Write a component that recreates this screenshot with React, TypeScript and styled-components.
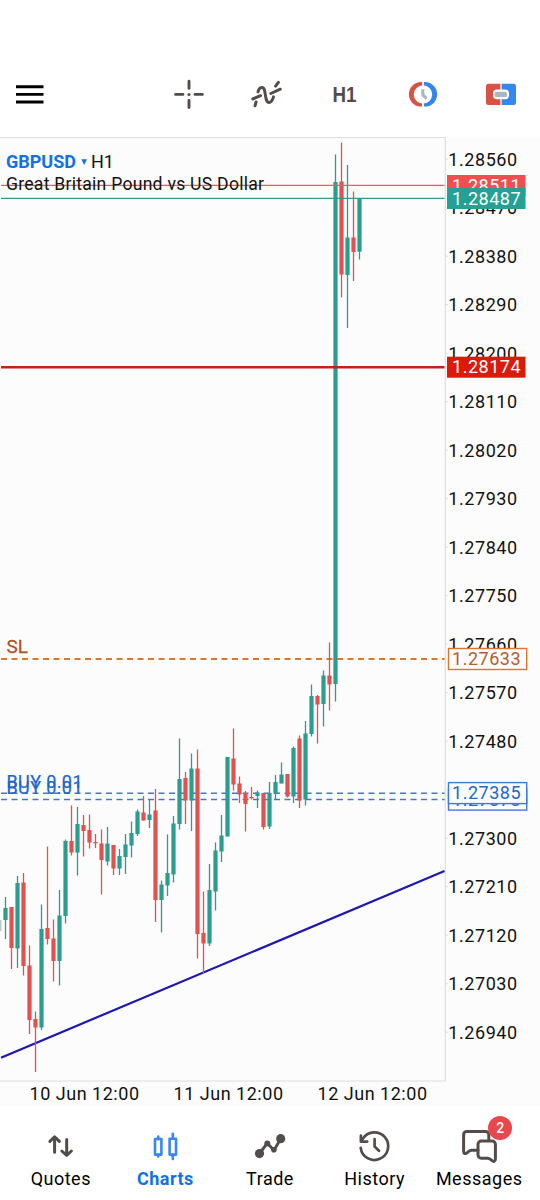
import React from 'react'
import styled, { createGlobalStyle } from 'styled-components'

const GlobalStyle = createGlobalStyle`
  body {
    margin: 0;
    background: #fff;
    font-family: Roboto, 'Liberation Sans', sans-serif;
  }
`

const colors = {
  up: '#2a9d8f',
  down: '#e0524f',
  icon: '#544c49',
  accent: '#1370e6',
  ink: '#111',
}

const Screen = styled.div`
  width: 540px;
  height: 1200px;
  display: flex;
  flex-direction: column;
  background: #fff;
  overflow: hidden;
`

const Header = styled.header`
  height: 137px;
  box-sizing: border-box;
  padding: 51px 0 0 10px;
  display: flex;
  align-items: center;
  justify-content: space-between;
`

const Tools = styled.div`
  display: grid;
  grid-template-columns: repeat(5, 78px);
`

const IconButton = styled.button`
  border: 0;
  padding: 0;
  background: none;
  display: flex;
  align-items: center;
  justify-content: center;
`

const Icon = styled.svg`
  display: block;
  width: 40px;
  height: 40px;
  overflow: visible;
  fill: none;
  stroke-linecap: round;
  stroke-linejoin: round;
`

const ChartSvg = styled.svg`
  display: block;
  flex: 0 0 970px;
  width: 540px;
  height: 970px;
  background: #fcfcfc;
`

const Nav = styled.nav`
  flex: 1;
  display: grid;
  grid-template-columns: repeat(5, 104.6px);
  justify-content: center;
  padding-top: 18.5px;
`

const NavItem = styled.a<{ $active?: boolean }>`
  display: flex;
  flex-direction: column;
  align-items: center;
  font-size: 18px;
  line-height: 22px;
  letter-spacing: 0.5px;
  white-space: nowrap;
  font-weight: ${(p) => (p.$active ? 700 : 400)};
  color: ${(p) => (p.$active ? colors.accent : '#000')};
`

const NavIcon = styled.div`
  position: relative;
  height: 42.5px;
  margin-right: 1px;
`

const Badge = styled.span`
  position: absolute;
  left: 29.5px;
  top: -9.5px;
  width: 24px;
  height: 24px;
  border-radius: 50%;
  background: #e8484c;
  color: #fff;
  font-size: 14px;
  font-weight: 500;
  line-height: 24px;
  letter-spacing: 0;
  text-align: center;
`

// [direction, high, body top, body bottom, low]
type Candle = ['u' | 'd', number, number, number, number]

const candles: Candle[] = [
  ['u', 897, 908, 920, 939],
  ['d', 907, 907, 948, 969],
  ['u', 876, 883, 948.5, 968],
  ['d', 873, 882.5, 966, 975.5],
  ['d', 945.5, 965.5, 1020, 1034],
  ['d', 1011.5, 1019, 1027.5, 1072],
  ['u', 904.5, 929, 1027.5, 1030],
  ['d', 846.5, 928, 939, 944.5],
  ['d', 919.5, 938.5, 961, 981.5],
  ['u', 890, 915.5, 961, 985.5],
  ['u', 839.5, 841, 916, 923.5],
  ['d', 805.5, 841, 852.5, 855.5],
  ['u', 807, 824, 852.5, 875.5],
  ['d', 815, 825, 831, 856.5],
  ['d', 814.5, 830, 842.5, 848.5],
  ['d', 834, 842, 843.3, 848],
  ['d', 829.5, 843.5, 860, 894.5],
  ['u', 827, 843.5, 861.5, 865.5],
  ['d', 845, 845, 868.5, 875],
  ['u', 849, 856, 868.5, 875],
  ['u', 834, 844.5, 857, 874],
  ['u', 821.5, 833, 845.5, 857.5],
  ['u', 809.5, 811.5, 834, 836],
  ['d', 796, 812.5, 820.5, 820.5],
  ['u', 800, 814.5, 820, 828],
  ['d', 789, 810.5, 900, 922],
  ['u', 880.5, 884.5, 900, 932.5],
  ['u', 834.5, 873, 885.5, 896],
  ['u', 816, 823.5, 874.5, 882.5],
  ['u', 738.5, 779, 824, 829.5],
  ['d', 772, 778, 800.5, 824],
  ['u', 753.5, 768.5, 800.5, 831],
  ['d', 749.5, 768.5, 934, 958.5],
  ['d', 891.5, 933, 943.5, 974],
  ['u', 864, 890, 943.5, 946],
  ['u', 842.5, 850.5, 891.5, 910.5],
  ['u', 815, 835.5, 851.5, 862],
  ['u', 757, 757, 836.5, 836.5],
  ['d', 728.5, 758.5, 784.5, 790.5],
  ['d', 776.5, 783.5, 794.5, 803],
  ['d', 791, 793, 804, 831.5],
  ['d', 787, 797, 798.3, 799.5],
  ['u', 790.5, 792.5, 796, 808],
  ['d', 793, 793, 827, 829.5],
  ['u', 782, 793, 826.5, 829],
  ['u', 775, 782, 793.5, 799],
  ['u', 762.5, 774.5, 783.5, 783.5],
  ['d', 774, 774, 796.5, 797.5],
  ['u', 746.5, 748, 796.5, 803],
  ['d', 735.5, 738.5, 800.5, 808],
  ['u', 721, 733.5, 799.5, 805.5],
  ['u', 684.5, 696, 734, 736.5],
  ['d', 695, 696, 704.5, 743.5],
  ['u', 670.5, 675.5, 704, 726.5],
  ['d', 642.5, 675.5, 684.5, 710.5],
  ['u', 154.5, 182, 684, 701.5],
  ['d', 142.5, 181.5, 274.5, 297.5],
  ['u', 165, 237.5, 275, 328],
  ['d', 191.5, 237.5, 252, 281],
  ['u', 198, 198.5, 251.7, 259.5],
]

// the 1.27390 tick is fully covered by the order tags
const ticks = Array.from({ length: 19 }, (_, i) => ({
  y: 159.2 + i * 48.5,
  label: (1.2856 - i * 0.0009).toFixed(5),
})).filter(({ label }) => label !== '1.27390')

const dates = [
  { x: 29.5, label: '10 Jun 12:00' },
  { x: 173.5, label: '11 Jun 12:00' },
  { x: 317.5, label: '12 Jun 12:00' },
]

interface PriceTagProps {
  y: number
  label: string
  fill: string
  stroke?: string
  color?: string
}

const PriceTag: React.FC<PriceTagProps> = ({ y, label, fill, stroke, color = '#fff' }) => (
  <g>
    {stroke ? (
      <rect x={448.5} y={y - 10.5} width={78.2} height={21} fill={fill} stroke={stroke} strokeWidth={1.4} />
    ) : (
      <rect x={447} y={y - 10.5} width={78.5} height={21} fill={fill} />
    )}
    <text x={452} y={y + 6.2} fontSize={18} fill={color} textLength={68.5} lengthAdjust='spacing'>
      {label}
    </text>
  </g>
)

const Chart: React.FC = () => (
  <ChartSvg viewBox='0 137 540 970'>
    <path d='M0 137.5H445.3V1081H0' fill='none' stroke='#dedede' strokeWidth={1.2} />

    <path d='M1 793.3H444.5M1 799.6H444.5' stroke='#3f78cf' strokeWidth={1.5} strokeDasharray='6 4.5' />
    <path d='M1 659H444.5' stroke='#d9772f' strokeWidth={1.9} strokeDasharray='6 4.5' />
    <path d='M1 1057.7L444.5 871' stroke='#1c18b4' strokeWidth={2.2} />
    <path d='M0.8 920V931' stroke='#9ab5b0' strokeWidth={1} />

    {candles.map(([dir, high, top, bottom, low], i) => {
      const x = 5.5 + i * 6
      const color = dir === 'u' ? colors.up : colors.down
      return (
        <g key={i} fill={color}>
          <rect x={x - 0.65} y={high} width={1.3} height={low - high} />
          <rect x={x - 2.1} y={top} width={4.2} height={bottom - top} />
        </g>
      )
    })}

    <path d='M1 185.4H444.5' stroke='#e2605d' strokeWidth={1.1} />
    <path d='M1 198.4H444.5' stroke='#2f9e92' strokeWidth={1.1} />
    <path d='M1 367.2H444.5' stroke='#cf1a17' strokeWidth={2.5} />

    <text x={6} y={167.8} fontSize={18.4} fontWeight={700} fill={colors.accent} textLength={70} lengthAdjust='spacingAndGlyphs'>
      GBPUSD
    </text>
    <path d='M81.3 159.3H87L84.15 165Z' fill={colors.accent} />
    <text x={91} y={167.8} fontSize={17.8} fill={colors.ink} textLength={23} lengthAdjust='spacingAndGlyphs'>
      H1
    </text>
    <text x={6} y={190} fontSize={17.6} fill={colors.ink} textLength={258} lengthAdjust='spacing'>
      Great Britain Pound vs US Dollar
    </text>
    <text x={6.5} y={653.3} fontSize={18.2} fill='#a8562a' stroke='#a8562a' strokeWidth={0.3} textLength={21.5} lengthAdjust='spacingAndGlyphs'>
      SL
    </text>
    <g fontSize={18} fill='#1f66cc' stroke='#1f66cc' strokeWidth={0.2}>
      <text x={6.5} y={787.5} textLength={76} lengthAdjust='spacing'>BUY 0.01</text>
      <text x={6.5} y={793.5} textLength={76} lengthAdjust='spacing'>BUY 0.01</text>
    </g>

    {ticks.map(({ y, label }) => (
      <g key={label}>
        <path d={`M445 ${y}H448`} stroke='#dedede' />
        <text x={448.3} y={y + 6.3} fontSize={18} fill={colors.ink} textLength={68.8} lengthAdjust='spacing'>
          {label}
        </text>
      </g>
    ))}

    <PriceTag y={185.5} label='1.28511' fill='#f04f50' />
    <PriceTag y={198.5} label='1.28487' fill='#22a194' />
    <PriceTag y={367.2} label='1.28174' fill='#dc1a0a' />
    <PriceTag y={659} label='1.27633' fill='#fcfcfc' stroke='#d9772f' color='#b35c33' />
    <PriceTag y={799.6} label='1.27373' fill='#fcfcfc' stroke='#3b7bdb' color='#2468c8' />
    <PriceTag y={793.1} label='1.27385' fill='#fcfcfc' stroke='#3b7bdb' color='#2468c8' />

    {dates.map(({ x, label }) => (
      <text key={label} x={x} y={1099.6} fontSize={18} fill={colors.ink} textLength={109.5} lengthAdjust='spacing'>
        {label}
      </text>
    ))}
  </ChartSvg>
)

const TopBar: React.FC = () => (
  <Header>
    <IconButton>
      <Icon viewBox='-20 -20.4 40 40'>
        <path d='M-14-7.7H13.5M-14 0H13.5M-14 7.6H13.5' stroke='#000' strokeWidth={2.9} strokeLinecap='butt' />
      </Icon>
    </IconButton>
    <Tools>
      <IconButton>
        <Icon viewBox='-20 -20.4 40 40' stroke={colors.icon} strokeWidth={2.9}>
          <path d='M-13.4 0H-6M6 0H13.4M0-13.2V-6M0 6V13.2' />
          <circle r={1.5} fill={colors.icon} stroke='none' />
        </Icon>
      </IconButton>
      <IconButton>
        <Icon viewBox='-20 -20.4 40 40' stroke={colors.icon} strokeWidth={3}>
          <path d='M-14.2 4.6L-6.4 1.3M3.8-0.9L13.3-5.2M-12 11.4L-10.9 7.6M8.6-8.3L11.4-12' />
          <path d='M-9-2.5C-7.5-8.5-3-8-2.3-3.5C-1.2 3-1 8 2 8C4.8 8 5.8 5 6.5 2.5' />
        </Icon>
      </IconButton>
      <IconButton>
        <Icon viewBox='-20 -20 40 40'>
          <text x={-12.5} y={8} fontSize={22.8} fontWeight={700} fill={colors.icon} textLength={24} lengthAdjust='spacingAndGlyphs'>
            H1
          </text>
        </Icon>
      </IconButton>
      <IconButton>
        <Icon viewBox='-20 -20.4 40 40'>
          <path d='M-0.9-12.3H-3A12.2 12.3 0 0 0-3 12.2H-0.9Z' fill='#d65346' />
          <path d='M0.9-12.3H3A12.2 12.3 0 0 1 3 12.2H0.9Z' fill='#3586ef' />
          <circle r={9.2} fill='#fff' />
          <path d='M-0.2-5.2V0.4L3.6 4.2' stroke='#a9b8bf' strokeWidth={3.1} strokeLinecap='butt' />
        </Icon>
      </IconButton>
      <IconButton>
        <Icon viewBox='-20 -20.4 40 40'>
          <path d='M-0.6-10.6H-12.5A2.5 2.5 0 0 0-15-8.1V8A2.5 2.5 0 0 0-12.5 10.5H-0.6Z' fill='#d65346' />
          <path d='M0.6-10.6H12.5A2.5 2.5 0 0 1 15-8.1V8A2.5 2.5 0 0 1 12.5 10.5H0.6Z' fill='#3586ef' />
          <rect x={-8} y={-4.8} width={16} height={9.6} rx={4} fill='#fff' />
          <rect x={-6.4} y={-2.7} width={12.6} height={5.4} rx={2.2} fill='#a9b8bf' />
        </Icon>
      </IconButton>
    </Tools>
  </Header>
)

const BottomNav: React.FC = () => (
  <Nav>
    <NavItem>
      <NavIcon>
        <Icon viewBox='0 0 40 40' stroke={colors.icon} strokeWidth={3}>
          <path d='M14.6 26.2V11.4M9.9 15.4L14.6 10.8L19.4 15.4M26.7 13.6V28.4M21.8 25L26.7 29.4L31.4 25' />
        </Icon>
      </NavIcon>
      Quotes
    </NavItem>
    <NavItem $active>
      <NavIcon>
        <Icon viewBox='0 0 40 40' stroke='#3b86f5' strokeWidth={2.6}>
          <rect x={10} y={13} width={6.4} height={15.6} />
          <rect x={24.6} y={12.8} width={6.4} height={15.8} />
          <path d='M13.2 10.6V13M13.2 28.6V30.6M27.8 7.8V12.8M27.8 28.6V33' />
        </Icon>
      </NavIcon>
      Charts
    </NavItem>
    <NavItem>
      <NavIcon>
        <Icon viewBox='0 0 40 40' stroke={colors.icon} strokeWidth={2.9}>
          <path d='M9.5 27.5L17.3 17.2L24 24.2L30.7 12.7' />
          <g fill={colors.icon} stroke='none'>
            <circle cx={9.5} cy={27.6} r={4.6} />
            <circle cx={17.3} cy={17.4} r={3} />
            <circle cx={23.9} cy={23.8} r={2.8} />
            <circle cx={30.7} cy={12.7} r={4.6} />
          </g>
        </Icon>
      </NavIcon>
      Trade
    </NavItem>
    <NavItem>
      <NavIcon>
        <Icon viewBox='0 0 40 40' stroke={colors.icon} strokeWidth={2.7}>
          <path d='M6.7 21.8A13.8 13.8 0 1 0 9 12.4L7.2 15.2' />
          <path d='M6.9 9.7V15.6H13.2' />
          <path d='M20.6 13.2V20.6L25 24.8' />
        </Icon>
      </NavIcon>
      History
    </NavItem>
    <NavItem>
      <NavIcon>
        <Icon viewBox='0 0 40 40' stroke={colors.icon} strokeWidth={3}>
          <path d='M19 24.3H12.5C10.5 24.3 9.5 25.3 8.3 26.6C6.5 28.3 4.6 27.8 4.6 25V8.6A3.2 3.2 0 0 1 7.8 5.4H26.6A3.2 3.2 0 0 1 29.8 8.6V13.6' />
          <path d='M22.2 15H33.2A3.2 3.2 0 0 1 36.4 18.2V33C36.4 35.8 34.6 36 33 34.5C31.6 33.2 30.6 32.2 28.8 32.2H22.2A3.2 3.2 0 0 1 19 29V18.2A3.2 3.2 0 0 1 22.2 15Z' />
        </Icon>
        <Badge>2</Badge>
      </NavIcon>
      Messages
    </NavItem>
  </Nav>
)

const App: React.FC = () => (
  <Screen>
    <GlobalStyle />
    <TopBar />
    <Chart />
    <BottomNav />
  </Screen>
)

export default App
